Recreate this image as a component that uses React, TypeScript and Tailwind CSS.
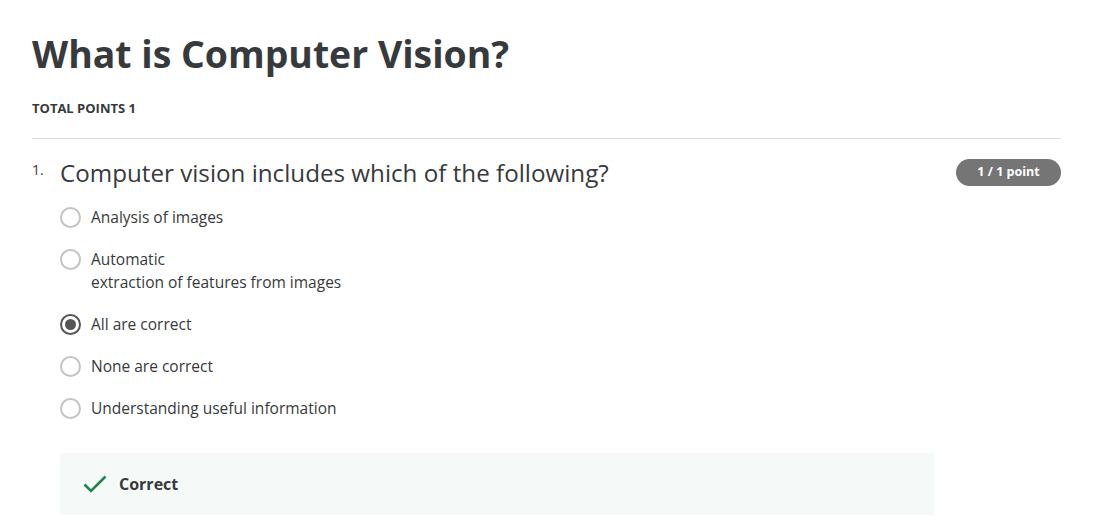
import "react";

const options = [
  { label: "Analysis of images" },
  { label: "Automatic", sub: "extraction of features from images" },
  { label: "All are correct", selected: true },
  { label: "None are correct" },
  { label: "Understanding useful information" },
];

function Radio({ selected }: { selected?: boolean }) {
  if (selected) {
    return (
      <span className="mt-[1px] flex h-[21px] w-[21px] shrink-0 items-center justify-center rounded-full border-2 border-[#555]">
        <span className="h-[11px] w-[11px] rounded-full bg-[#555]" />
      </span>
    );
  }
  return <span className="mt-[1px] h-[21px] w-[21px] shrink-0 rounded-full border-2 border-[#c4c4c4]" />;
}

export default function App() {
  return (
    <div
      className="min-h-[516px] bg-white px-[32px] pt-[28px] text-[#373a3c]"
      style={{ fontFamily: '"Open Sans", sans-serif' }}
    >
      <h1 className="text-[37.4px] font-bold leading-[52px] text-[#373a3c]">What is Computer Vision?</h1>
      <p className="mt-[19px] text-[13px] font-bold leading-[18px]">TOTAL POINTS 1</p>
      <div className="mt-[21px] w-[1029px] border-t border-[#dcdcdc]" />

      <div className="mt-[19px] flex w-[1029px] items-start">
        <span className="w-[28px] pt-[2px] text-[14px] leading-[20px]">1.</span>
        <h2 className="flex-1 text-[24.2px] leading-[30px]">Computer vision includes which of the following?</h2>
        <span className="mt-[1px] flex h-[27px] w-[105px] items-center justify-center rounded-full bg-[#757575] text-[12.5px] font-bold text-white">
          1 / 1 point
        </span>
      </div>

      <ul className="ml-[28px] mt-[18px] flex flex-col gap-[19px]">
        {options.map((o) => (
          <li key={o.label} className="flex items-start gap-[10px]">
            <Radio selected={o.selected} />
            <div className="text-[15.5px] leading-[23px]">
              <div>{o.label}</div>
              {o.sub && <div>{o.sub}</div>}
            </div>
          </li>
        ))}
      </ul>

      <div className="ml-[28px] mt-[33px] flex h-[62px] w-[874px] items-center gap-[12px] bg-[#f5f9f8] pl-[23px]">
        <svg width="24" height="20" viewBox="0 0 24 20" fill="none">
          <path d="M1.5 10.5 L8 17 L22.5 2.5" stroke="#1f8354" strokeWidth="2.6" />
        </svg>
        <span className="text-[16px] font-bold">Correct</span>
      </div>
    </div>
  );
}
